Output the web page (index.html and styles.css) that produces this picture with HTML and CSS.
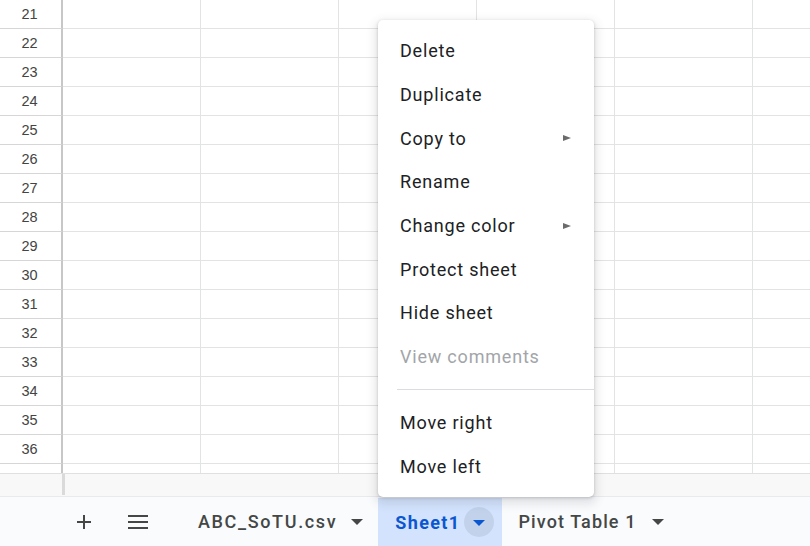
FILE: index.html
```html
<!DOCTYPE html>
<html>
<head>
<meta charset="utf-8">
<link rel="stylesheet" href="styles.css">
</head>
<body>
<div class="app">
  <div class="grid" id="grid"></div>
  <div class="hscroll"><div class="hscroll-corner"></div></div>
  <div class="tabbar">
    <button class="icon-btn" aria-label="Add sheet">
      <svg width="16" height="16" viewBox="0 0 16 16"><path d="M8 1v14M1 8h14" stroke="#444746" stroke-width="2" fill="none"/></svg>
    </button>
    <button class="icon-btn" aria-label="All sheets">
      <svg width="20" height="14" viewBox="0 0 20 14"><path d="M0 1h20M0 7h20M0 13h20" stroke="#444746" stroke-width="2" fill="none"/></svg>
    </button>
    <div class="tab tab-first">
      <span class="tab-label">ABC_SoTU.csv</span>
      <span class="caret"></span>
    </div>
    <div class="tab tab-active">
      <span class="tab-label">Sheet1</span>
      <span class="caret-circle"><span class="caret caret-blue"></span></span>
    </div>
    <div class="tab tab-last">
      <span class="tab-label">Pivot Table 1</span>
      <span class="caret"></span>
    </div>
  </div>

  <div class="menu">
    <div class="item">Delete</div>
    <div class="item">Duplicate</div>
    <div class="item">Copy to<span class="sub"></span></div>
    <div class="item">Rename</div>
    <div class="item">Change color<span class="sub"></span></div>
    <div class="item">Protect sheet</div>
    <div class="item">Hide sheet</div>
    <div class="item disabled">View comments</div>
    <div class="sep"></div>
    <div class="item">Move right</div>
    <div class="item">Move left</div>
  </div>
</div>
<script>
  var g = document.getElementById('grid');
  var html = '';
  for (var r = 21; r <= 37; r++) {
    html += '<div class="row"><div class="rh">' + (r <= 36 ? r : '') + '</div>';
    for (var c = 0; c < 5; c++) html += '<div class="cell"></div>';
    html += '<div class="cell cell-last"></div></div>';
  }
  g.innerHTML = html;
</script>
</body>
</html>
```

FILE: styles.css
```css
* { box-sizing: border-box; }
html, body { margin: 0; padding: 0; }
body { background: #fff; }

.app {
  position: relative;
  width: 810px;
  height: 546px;
  overflow: hidden;
  font-family: Roboto, "Liberation Sans", sans-serif;
}

.grid {
  height: 473px;
  overflow: hidden;
}

.row {
  display: flex;
  height: 29px;
}

.rh {
  flex: 0 0 63px;
  border-right: 2px solid #c7c7c7;
  border-bottom: 1px solid #d6d6d6;
  font-family: "Liberation Sans", Arial, sans-serif;
  font-size: 14.5px;
  color: #444;
  text-align: center;
  line-height: 28px;
  padding-right: 2px;
}

.cell {
  flex: 0 0 138px;
  border-right: 1px solid #e2e3e3;
  border-bottom: 1px solid #e2e3e3;
}

.hscroll {
  height: 23px;
  background: #f8f8f8;
  border-top: 1px solid #e0e0e0;
  padding-left: 62px;
}

.hscroll-corner {
  width: 3px;
  height: 21px;
  background: #dadada;
}

.tabbar {
  height: 50px;
  background: #f9fbfd;
  border-top: 1px solid #e8eaed;
  display: flex;
  align-items: stretch;
  padding-left: 66px;
}

.icon-btn {
  width: 36px;
  border: 0;
  background: transparent;
  padding: 0;
  display: flex;
  align-items: center;
  justify-content: center;
  margin-right: 18px;
}

.icon-btn + .icon-btn { margin-right: 24px; }

.tab {
  display: flex;
  align-items: center;
  padding: 0 16px 0 16px;
  font-family: Roboto, "Liberation Sans", sans-serif;
  font-weight: 500;
  font-size: 18px;
  letter-spacing: 1.3px;
  color: #444746;
  white-space: nowrap;
}

.tab-first {
  padding-left: 18px;
  padding-right: 15px;
  letter-spacing: 1.65px;
}

.tab-last { letter-spacing: 1.1px; }
.tab-last .tab-label { margin-right: 16px; }

.tab-label { margin-right: 14px; }

.caret {
  width: 0;
  height: 0;
  border-left: 6px solid transparent;
  border-right: 6px solid transparent;
  border-top: 6px solid #444746;
}

.tab-active {
  background: #d3e3fd;
  color: #0b57d0;
  font-weight: 700;
  letter-spacing: 1.35px;
  padding-left: 17px;
  padding-right: 8px;
  margin-top: 1px;
}

.tab-active .tab-label { margin-right: 4px; }

.caret-circle {
  width: 30px;
  height: 30px;
  border-radius: 50%;
  background: #c2d2eb;
  display: flex;
  align-items: center;
  justify-content: center;
}

.caret-blue { border-top-color: #0b57d0; margin-top: 2px; }

.menu {
  position: absolute;
  left: 378px;
  top: 20px;
  width: 216px;
  height: 477px;
  background: #fff;
  border-radius: 5px;
  box-shadow: 0 1px 3px rgba(60,64,67,.25), 0 4px 10px 3px rgba(60,64,67,.13);
  padding: 9px 0 8px;
}

.item {
  height: 43.7px;
  display: flex;
  align-items: center;
  padding-left: 22px;
  padding-right: 23px;
  font-size: 18px;
  color: #202124;
  letter-spacing: 0.8px;
  white-space: nowrap;
}

.item.disabled { color: #a2a5a9; }

.sub {
  margin-left: auto;
  width: 0;
  height: 0;
  border-top: 3.5px solid transparent;
  border-bottom: 3.5px solid transparent;
  border-left: 8px solid #6b6b6b;
}

.sep {
  height: 1px;
  background: #dadce0;
  margin: 10px 0 11px 19px;
}
```
